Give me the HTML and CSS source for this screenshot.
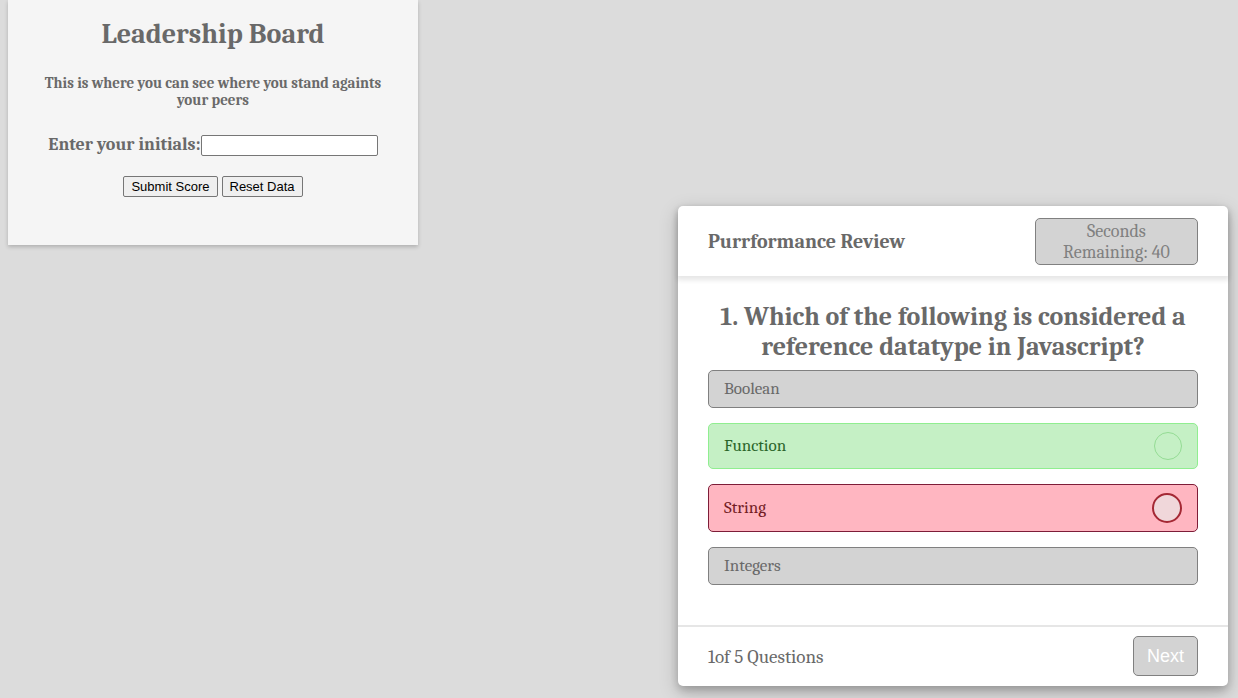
FILE: index.html
```html
<!DOCTYPE html>
<html lang="en">
<head>
<meta charset="utf-8">
<title>Purrformance Review</title>
<link rel="stylesheet" href="styles.css">
</head>
<body>
<main class="page">
  <section class="board">
    <h1 class="board-title">Leadership Board</h1>
    <p class="board-note">This is where you can see where you stand againts your peers</p>
    <form class="board-form">
      <div class="initials-row">
        <label class="initials-label" for="initials">Enter your initials:</label><input class="initials-input" id="initials" type="text">
      </div>
      <div class="board-actions">
        <button class="plain-button" type="button">Submit Score</button>
        <button class="plain-button" type="button">Reset Data</button>
      </div>
    </form>
  </section>
  <section class="quiz">
    <header class="quiz-header">
      <h2 class="quiz-title">Purrformance Review</h2>
      <div class="timer">Seconds Remaining: 40</div>
    </header>
    <div class="quiz-body">
      <h2 class="question">1. Which of the following is considered a reference datatype in Javascript?</h2>
      <div class="options">
        <button class="option" type="button">Boolean</button>
        <button class="option option-correct" type="button">Function<span class="mark mark-correct"></span></button>
        <button class="option option-wrong" type="button">String<span class="mark mark-wrong"></span></button>
        <button class="option" type="button">Integers</button>
      </div>
    </div>
    <footer class="quiz-footer">
      <span class="progress">1of 5 Questions</span>
      <button class="next-button" type="button">Next</button>
    </footer>
  </section>
</main>
</body>
</html>
```
FILE: styles.css
```css
* {
  box-sizing: border-box;
}

body {
  margin: 0;
  background: gainsboro;
  color: dimgray;
  font-family: Cambria, "Noto Serif", "DejaVu Serif", serif;
}

.page {
  display: flex;
  justify-content: space-between;
  align-items: flex-start;
  min-height: 100vh;
  padding: 0 10px 12px 8px;
}

.board {
  width: 410px;
  padding: 17px 30px 48px;
  background: whitesmoke;
  box-shadow: 0 2px 4px rgba(0, 0, 0, 0.2);
  text-align: center;
}
.board-title {
  margin: 0;
  font-size: 28px;
  line-height: 34px;
}
.board-note {
  margin: 24px 0 25px;
  font-size: 15px;
  line-height: 17px;
  font-weight: bold;
}
.initials-row {
  display: flex;
  justify-content: center;
  align-items: center;
  margin-bottom: 20px;
}
.initials-label {
  font-size: 18px;
  line-height: 22px;
  font-weight: bold;
  white-space: nowrap;
}
.initials-input {
  width: 177px;
  height: 21px;
  padding: 1px 2px;
  border: 1px solid #767676;
  border-radius: 2px;
  background: #fff;
}
.board-actions {
  display: flex;
  justify-content: center;
  gap: 4px;
}
.plain-button {
  height: 21px;
  padding: 0 7px;
  border: 1px solid #767676;
  border-radius: 2px;
  background: #efefef;
  color: #000;
  font-family: "Liberation Sans", Arial, sans-serif;
  font-size: 13px;
}

.quiz {
  align-self: flex-end;
  width: 550px;
  border-radius: 5px;
  background: #fff;
  box-shadow: 0 4px 8px rgba(0, 0, 0, 0.2), 0 6px 20px rgba(0, 0, 0, 0.19);
}
.quiz-header {
  display: flex;
  justify-content: space-between;
  align-items: center;
  padding: 12px 30px 11px;
  border-radius: 5px 5px 0 0;
  box-shadow: 0 3px 5px 1px rgba(0, 0, 0, 0.1);
}
.quiz-title {
  margin: 0;
  font-size: 20px;
  line-height: 26px;
}
.timer {
  width: 163px;
  padding: 2px 24px 1px;
  border: 1px solid gray;
  border-radius: 5px;
  background: lightgray;
  color: gray;
  font-size: 18px;
  line-height: 21px;
  text-align: center;
}
.quiz-body {
  padding: 26px 30px 40px;
}
.question {
  margin: 0 0 8px;
  font-size: 26px;
  line-height: 30px;
  text-align: center;
}
.options {
  display: grid;
  gap: 15px;
}
.option {
  display: flex;
  justify-content: space-between;
  align-items: center;
  padding: 8px 15px;
  border: 1px solid gray;
  border-radius: 5px;
  background: lightgray;
  color: dimgray;
  font-family: inherit;
  font-size: 17px;
  line-height: 20px;
}
.option-correct {
  border-color: lightgreen;
  background: #c5f0c5;
  color: #2a652a;
}
.option-wrong {
  border-color: #7d1d38;
  background: lightpink;
  color: #721c24;
}
.mark {
  width: 28px;
  height: 28px;
  border: 1px solid #94dc94;
  border-radius: 50%;
}
.mark-wrong {
  width: 30px;
  height: 30px;
  border: 2px solid #a42834;
  background: #f0d7da;
}
.quiz-footer {
  display: flex;
  justify-content: space-between;
  align-items: center;
  padding: 9px 30px 10px;
  border-top: 2px solid #e6e6e6;
}
.progress {
  padding-top: 2px;
  font-size: 19px;
  line-height: 22px;
}
.next-button {
  width: 65px;
  height: 40px;
  border: 1px solid gray;
  border-radius: 5px;
  background: lightgray;
  color: #fff;
  font-family: "Liberation Sans", Arial, sans-serif;
  font-size: 18px;
}
```
